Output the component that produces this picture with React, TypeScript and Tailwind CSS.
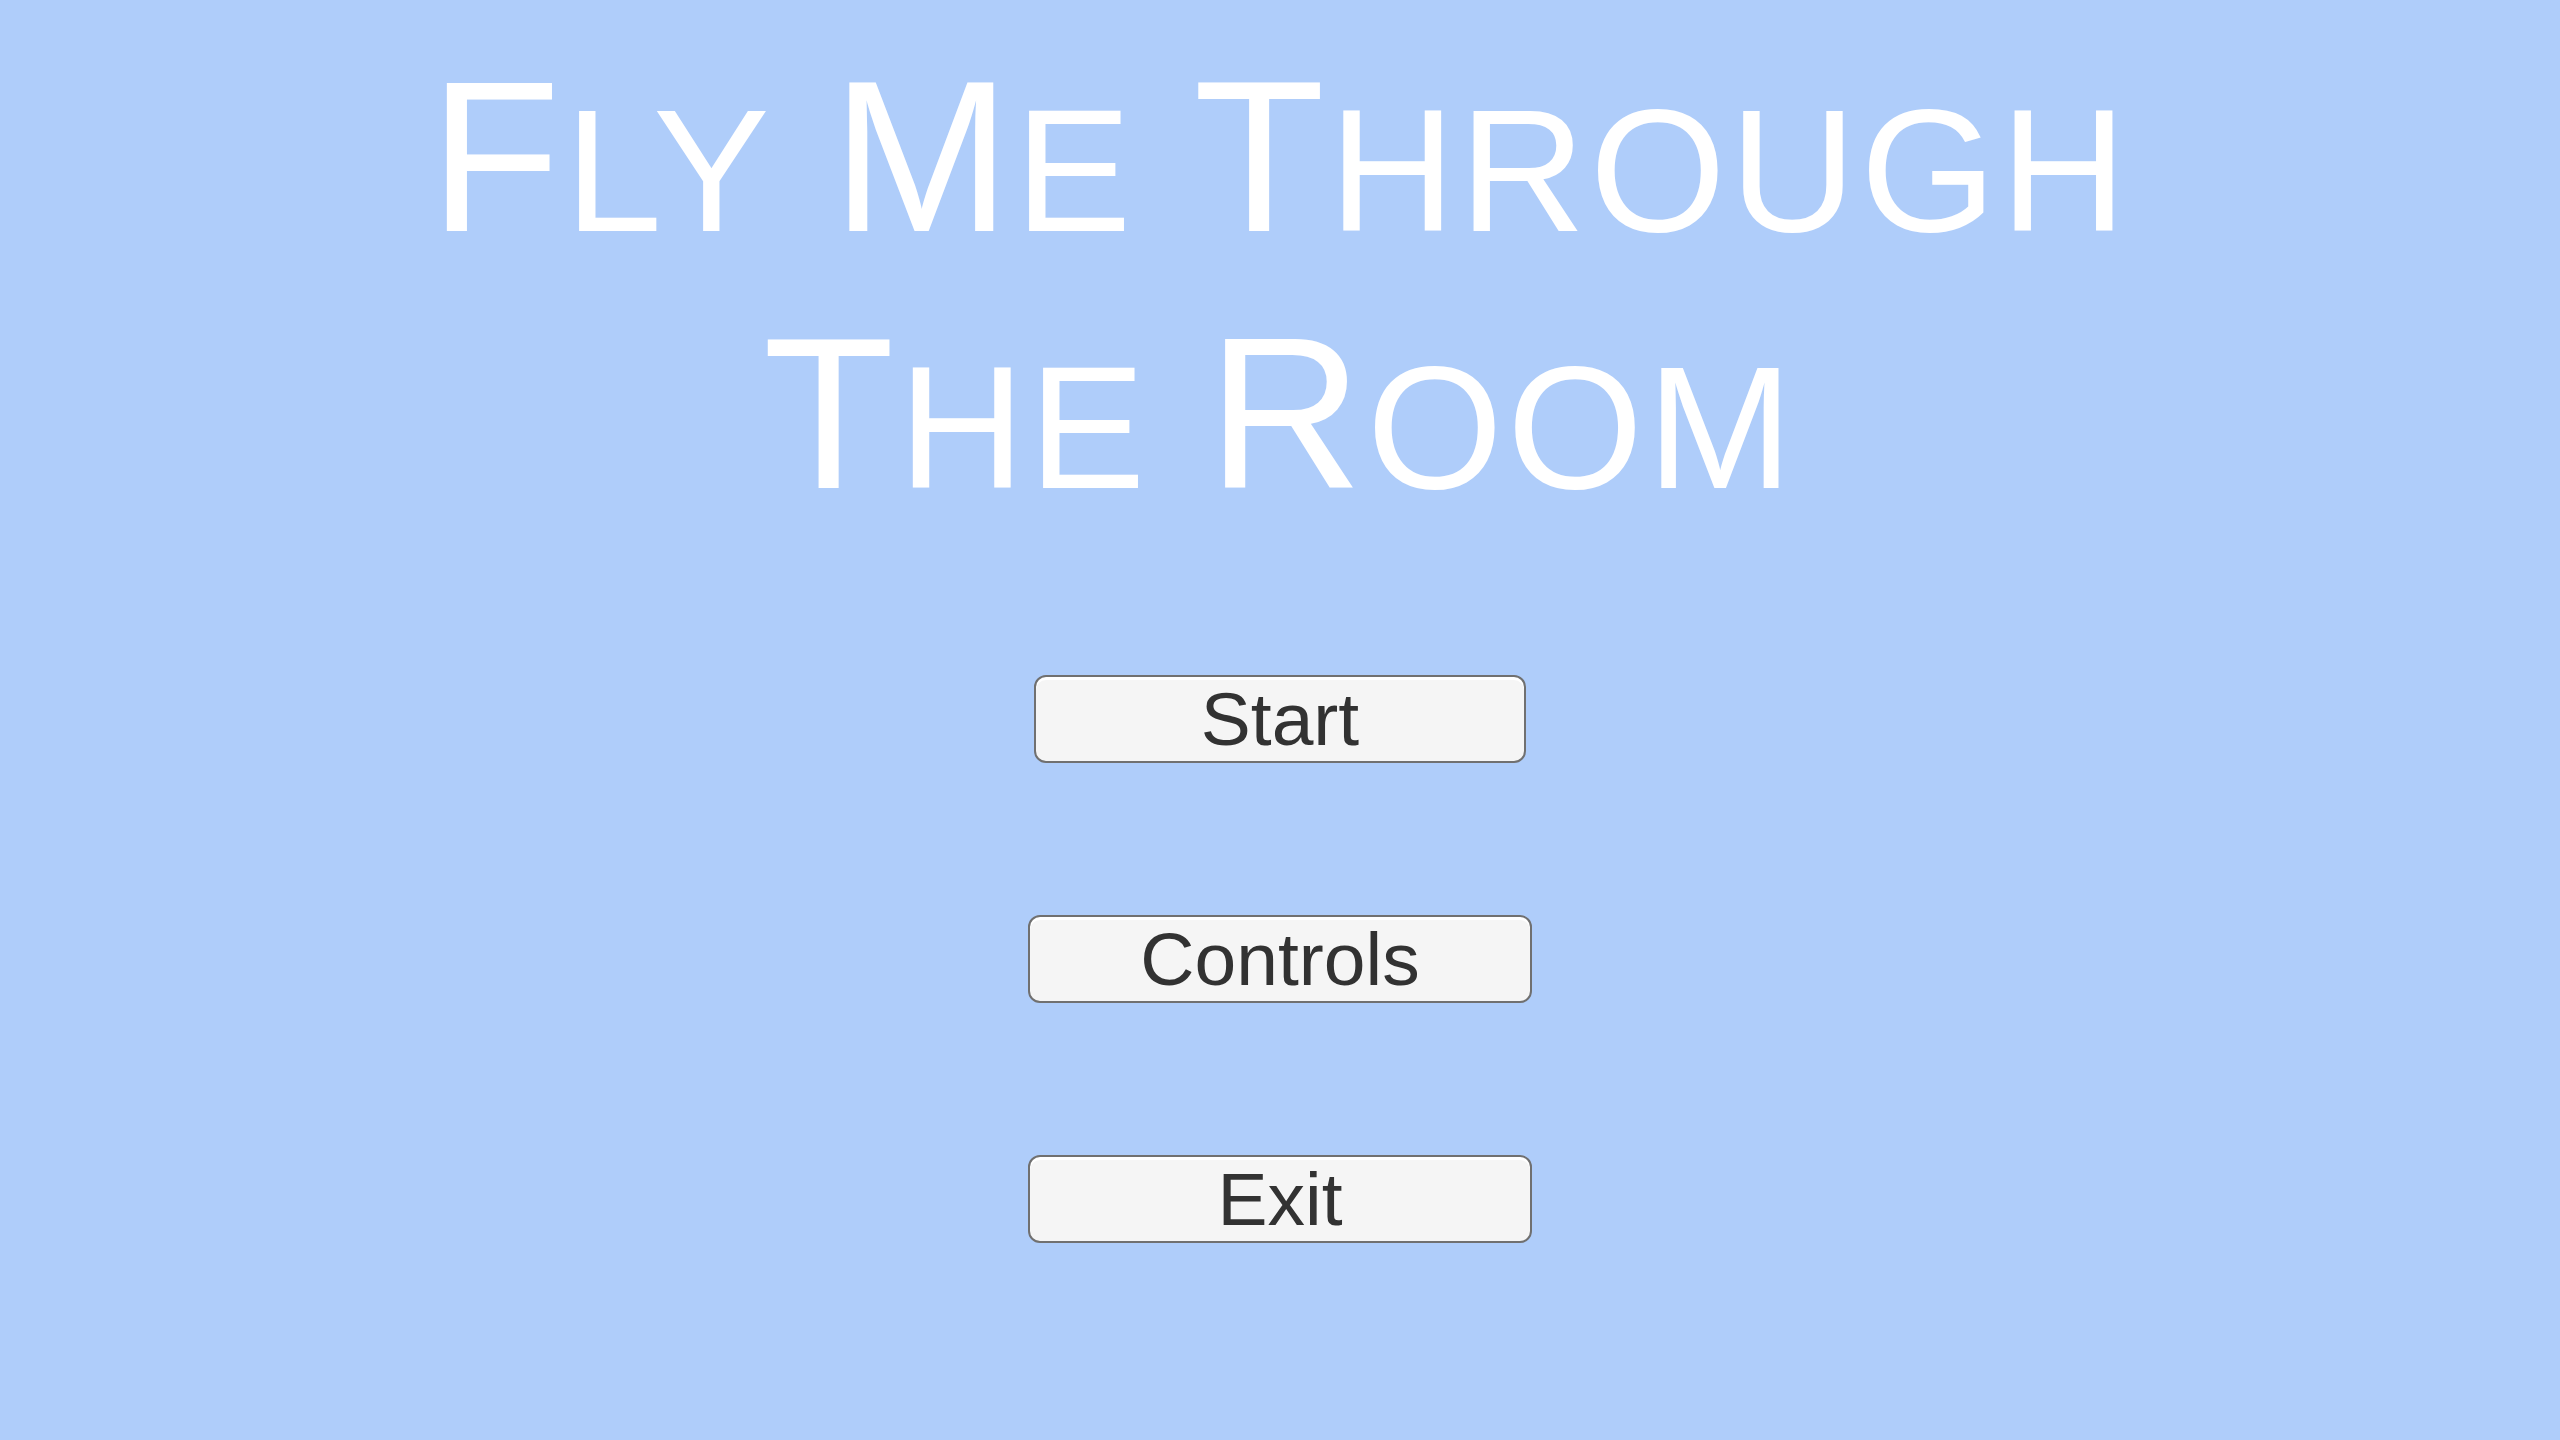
import React from 'react';

const font = { fontFamily: '"Liberation Sans", Arial, sans-serif' };

function TitleWord({ word }: { word: string }) {
  return (
    <span>
      <span className="text-[215px] leading-none">{word[0]}</span>
      <span className="text-[175px] leading-none">{word.slice(1).toUpperCase()}</span>
    </span>
  );
}

function TitleLine({ words }: { words: string[] }) {
  return (
    <div className="flex justify-center gap-[58px] leading-[257px] h-[257px] tracking-[4px] text-white">
      {words.map((w) => (
        <TitleWord key={w} word={w} />
      ))}
    </div>
  );
}

function MenuButton({ label, wide }: { label: string; wide?: boolean }) {
  return (
    <button
      className={`${wide ? 'w-[504px]' : 'w-[492px]'} h-[88px] flex items-center justify-center rounded-[12px] border-2 border-[#707070] bg-[#f5f5f5] shadow-[inset_0_3px_0_#ffffff] text-[75px] leading-none text-[#323232]`}
    >
      {label}
    </button>
  );
}

export default function App() {
  return (
    <div className="w-full min-h-screen bg-[#afcdfa] flex flex-col items-center pt-[49px]" style={font}>
      <TitleLine words={['Fly', 'Me', 'Through']} />
      <TitleLine words={['The', 'Room']} />
      <div className="flex flex-col items-center gap-[152px] mt-[112px]">
        <MenuButton label="Start" />
        <MenuButton label="Controls" wide />
        <MenuButton label="Exit" wide />
      </div>
    </div>
  );
}
